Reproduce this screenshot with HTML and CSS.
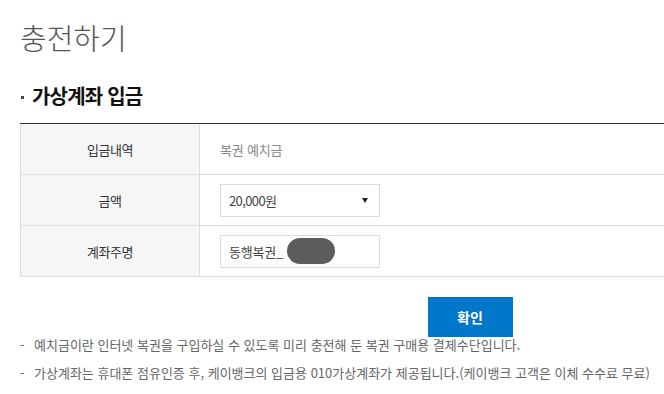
FILE: index.html
```html
<!DOCTYPE html>
<html lang="ko">
<head>
    <meta charset="UTF-8">
    <meta name="viewport" content="width=device-width, initial-scale=1.0">
    <title>충전하기</title>
    <link rel="stylesheet" href="styles.css">
</head>
<body>
    <div class="page">
        <h1 class="title">충전하기</h1>
        <h2 class="sub-title"><span class="dot"></span>가상계좌 입금</h2>

        <div class="form-table">
            <div class="form-row">
                <div class="form-label">입금내역</div>
                <div class="form-value text-gray">복권 예치금</div>
            </div>
            <div class="form-row">
                <div class="form-label">금액</div>
                <div class="form-value">
                    <div class="select-box">
                        <span>20,000원</span>
                        <span class="arrow"></span>
                    </div>
                </div>
            </div>
            <div class="form-row">
                <div class="form-label">계좌주명</div>
                <div class="form-value">
                    <div class="input-box">
                        <span>동행복권_</span>
                        <span class="mask"></span>
                    </div>
                </div>
            </div>
        </div>

        <div class="btn-area">
            <button class="btn-confirm" type="button">확인</button>
        </div>

        <ul class="notice">
            <li><span class="dash">-</span>예치금이란 인터넷 복권을 구입하실 수 있도록 미리 충전해 둔 복권 구매용 결제수단입니다.</li>
            <li><span class="dash">-</span>가상계좌는 휴대폰 점유인증 후, 케이뱅크의 입금용 010가상계좌가 제공됩니다.(케이뱅크 고객은 이체 수수료 무료)</li>
        </ul>
    </div>
</body>
</html>
```

FILE: styles.css
```css
body {
    margin: 0;
    font-family: "Noto Sans CJK KR", "Noto Sans", sans-serif;
    background-color: #fff;
    color: #333;
    overflow: hidden;
}

.page {
    width: 900px;
    padding: 19px 0 0 20px;
}

.title {
    margin: 0;
    font-size: 29px;
    font-weight: 300;
    line-height: 36px;
    color: #555;
    letter-spacing: 0;
}

.sub-title {
    display: flex;
    align-items: center;
    margin: 27px 0 0;
    font-size: 20px;
    font-weight: bold;
    line-height: 28px;
    color: #111;
    letter-spacing: -0.8px;
}

.sub-title .dot {
    width: 3px;
    height: 3px;
    margin: 2px 8px 0 1px;
    background: #444;
}

.form-table {
    margin-top: 13px;
    border-top: 1px solid #333;
}

.form-row {
    display: grid;
    grid-template-columns: 180px 1fr;
    height: 50px;
    border-bottom: 1px solid #ddd;
}

.form-label {
    display: flex;
    align-items: center;
    justify-content: center;
    background: #f6f6f6;
    border-left: 1px solid #ddd;
    border-right: 1px solid #ddd;
    font-size: 13px;
    color: #333;
    letter-spacing: -0.4px;
}

.form-value {
    display: flex;
    align-items: center;
    padding-left: 20px;
    font-size: 13px;
    letter-spacing: -0.2px;
}

.text-gray {
    color: #888;
}

.select-box,
.input-box {
    display: flex;
    align-items: center;
    box-sizing: border-box;
    width: 160px;
    height: 33px;
    padding: 0 8px;
    border: 1px solid #ddd;
    color: #444;
}

.select-box {
    justify-content: space-between;
    padding-right: 11px;
    letter-spacing: -0.6px;
}

.select-box .arrow {
    width: 0;
    height: 0;
    border-left: 3.5px solid transparent;
    border-right: 3.5px solid transparent;
    border-top: 5px solid #222;
}

.input-box .mask {
    width: 48px;
    height: 26px;
    margin-left: 4px;
    border-radius: 13px;
    background: #5c5c5c;
}

.btn-area {
    display: flex;
    justify-content: center;
    margin-top: 20px;
}

.btn-confirm {
    width: 85px;
    height: 40px;
    border: 0;
    background: #0077c8;
    color: #fff;
    font-family: inherit;
    font-size: 14px;
    font-weight: bold;
}

.notice {
    margin: -3px 0 0;
    padding: 0;
    list-style: none;
    font-size: 13px;
    line-height: 22px;
    color: #666;
    letter-spacing: 0;
}

.notice li + li {
    margin-top: 6px;
}

.notice .dash {
    display: inline-block;
    width: 14px;
}
```
